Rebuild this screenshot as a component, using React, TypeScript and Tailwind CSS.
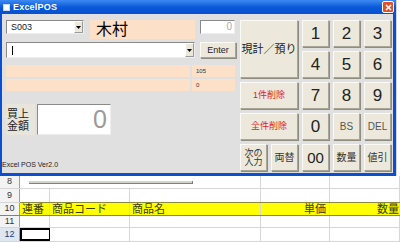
import React from "react";

const jp = { fontFamily: '"Liberation Sans", "Noto Sans CJK JP", sans-serif' };

function Btn({ children, className = "" }: { children: React.ReactNode; className?: string }) {
  return (
    <div
      className={
        "flex items-center justify-center bg-[#ece9dc] border border-t-[#fbfaf5] border-l-[#fbfaf5] border-b-[#a9a698] border-r-[#a9a698] shadow-[1px_1px_0_#8f8c80] leading-none " +
        className
      }
    >
      {children}
    </div>
  );
}

function Arrow() {
  return (
    <div className="w-[9px] h-full flex items-center justify-center bg-[#ece9dc] border border-t-white border-l-white border-b-[#9a9a9a] border-r-[#9a9a9a]">
      <svg width="5" height="3" viewBox="0 0 5 3">
        <path d="M0 0H5L2.5 3Z" fill="#000" />
      </svg>
    </div>
  );
}

function Sunken({ className = "", children }: { className?: string; children?: React.ReactNode }) {
  return (
    <div
      className={
        "bg-white border border-t-[#8a8a8a] border-l-[#8a8a8a] border-b-[#eeeeee] border-r-[#eeeeee] " +
        className
      }
    >
      {children}
    </div>
  );
}

function Cell({ w, children, className = "" }: { w: string; children?: React.ReactNode; className?: string }) {
  return (
    <div className={"h-full border-r border-[#d6d6d6] flex items-center shrink-0 " + w + " " + className}>{children}</div>
  );
}

function Row({ n, h, children, sel = false, className = "" }: { n: string; h: string; children?: React.ReactNode; sel?: boolean; className?: string }) {
  return (
    <div className={"flex border-b border-[#d6d6d6] " + h + " " + className}>
      <div
        className={
          "w-[20px] shrink-0 h-full flex items-center justify-center text-[9px] border-r border-[#9e9e9e] " +
          (sel ? "bg-[#dfe6f2] text-[#1d3f7a]" : "bg-[#f3f3f3] text-[#333]")
        }
      >
        {n}
      </div>
      {children}
    </div>
  );
}

export default function App() {
  return (
    <div className="w-[400px] h-[242px] overflow-hidden bg-white flex flex-col" style={jp}>
      <div className="flex h-[176px] shrink-0">
        <div className="w-[396px] h-full flex flex-col">
          {/* title bar */}
          <div className="h-[14px] shrink-0 bg-gradient-to-b from-[#3d8af2] via-[#0a5ad9] to-[#0850cf] flex items-center pl-[3px] pr-[2px]">
            <div className="w-[7px] h-[7px] bg-white border border-[#c8d8f0]" />
            <span className="ml-[3px] text-[9px] font-bold text-white leading-none tracking-[0.2px]">ExcelPOS</span>
            <div className="ml-auto w-[12px] h-[12px] rounded-[2px] bg-[#e0502a] border border-white flex items-center justify-center">
              <svg width="7" height="7" viewBox="0 0 7 7">
                <path d="M1 1L6 6M6 1L1 6" stroke="#fff" strokeWidth="1.6" />
              </svg>
            </div>
          </div>
          {/* body */}
          <div className="flex-1 bg-[#e0e0e0] border-l-2 border-r-[3px] border-b-[3px] border-[#0b4fd0] flex pl-[4px] pt-[6px]">
            {/* left column */}
            <div className="w-[230px] flex flex-col">
              <div className="flex items-start h-[19px]">
                <Sunken className="w-[78px] h-[14px] flex items-center">
                  <span className="flex-1 pl-[4px] text-[9px] leading-none text-[#222]">S003</span>
                  <Arrow />
                </Sunken>
                <div className="ml-[6px] w-[105px] h-[19px] bg-[#fde0c8] flex items-center pl-[6px] text-[16px] leading-none text-black">
                  木村
                </div>
                <Sunken className="ml-[5px] w-[35px] h-[14px] flex items-center justify-end pr-[2px] text-[10px] text-[#aaa] leading-none">
                  0
                </Sunken>
              </div>
              <div className="flex mt-[3px] h-[16px]">
                <Sunken className="w-[189px] h-[16px] flex items-center">
                  <div className="flex-1 pl-[5px]">
                    <div className="w-px h-[9px] bg-black" />
                  </div>
                  <Arrow />
                </Sunken>
                <Btn className="ml-[5px] w-[36px] h-[16px] text-[9px] text-[#222]">Enter</Btn>
              </div>
              <div className="flex mt-[7px] h-[12px]">
                <div className="w-[184px] bg-[#fde0c8]" />
                <div className="ml-[2px] w-[43px] bg-[#fde0c8] flex items-center pl-[4px] text-[6px] leading-none text-[#333]">105</div>
              </div>
              <div className="flex mt-[2px] h-[12px]">
                <div className="w-[184px] bg-[#fde0c8]" />
                <div className="ml-[2px] w-[43px] bg-[#fde0c8] flex items-center pl-[4px] text-[6px] leading-none text-[#333]">0</div>
              </div>
              <div className="flex mt-[13px] h-[31px]">
                <div className="w-[29px] bg-[#e8e6dc] flex flex-col justify-center pl-[1px] text-[11px] leading-[12px] text-[#222]">
                  <span>買上</span>
                  <span>金額</span>
                </div>
                <Sunken className="ml-[2px] w-[74px] h-[31px] flex items-center justify-end pr-[3px] text-[25px] leading-none text-[#9a9a9a]">
                  0
                </Sunken>
              </div>
              <div className="mt-[26px] -ml-[4px] text-[7px] leading-[8px] text-[#222]">Excel POS Ver2.0</div>
            </div>
            {/* right keypad */}
            <div className="ml-[4px] grid grid-cols-[repeat(5,27px)] grid-rows-[repeat(5,27px)] gap-[4px]">
              <Btn className="col-span-2 row-span-2 text-[11px] text-[#222]">現計／預り</Btn>
              <Btn className="text-[17px] text-[#222]">1</Btn>
              <Btn className="text-[17px] text-[#222]">2</Btn>
              <Btn className="text-[17px] text-[#222]">3</Btn>
              <Btn className="text-[17px] text-[#222]">4</Btn>
              <Btn className="text-[17px] text-[#222]">5</Btn>
              <Btn className="text-[17px] text-[#222]">6</Btn>
              <Btn className="col-span-2 text-[9px] text-[#e02020]">1件削除</Btn>
              <Btn className="text-[17px] text-[#222]">7</Btn>
              <Btn className="text-[17px] text-[#222]">8</Btn>
              <Btn className="text-[17px] text-[#222]">9</Btn>
              <Btn className="col-span-2 text-[9px] text-[#e02020]">全件削除</Btn>
              <Btn className="text-[17px] text-[#222]">0</Btn>
              <Btn className="text-[10px] text-[#555]">BS</Btn>
              <Btn className="text-[10px] text-[#555]">DEL</Btn>
              <Btn className="flex-col text-[9px] leading-[10px] text-[#333]">
                <span>次の</span>
                <span>入力</span>
              </Btn>
              <Btn className="text-[10px] text-[#333]">両替</Btn>
              <Btn className="text-[15px] text-[#222]">00</Btn>
              <Btn className="text-[10px] text-[#333]">数量</Btn>
              <Btn className="text-[10px] text-[#333]">値引</Btn>
            </div>
          </div>
        </div>
        <div className="flex-1 bg-white border-l border-[#d6d6d6]" />
      </div>
      {/* spreadsheet */}
      <div className="flex flex-col text-[#333]">
        <Row n="8" h="h-[13px]">
          <Cell w="w-[30px]" className="border-r-0">
            <div className="ml-[9px] w-[21px] h-[3px] bg-[#d4d4cc] border-b border-[#808080] mt-[1px]" />
          </Cell>
          <Cell w="w-[80px]" className="border-r-0">
            <div className="w-[80px] h-[3px] bg-[#d4d4cc] border-b border-[#808080] mt-[1px]" />
          </Cell>
          <Cell w="w-[131px]">
            <div className="w-[63px] h-[3px] bg-[#d4d4cc] border-b border-r border-[#808080] mt-[1px]" />
          </Cell>
          <Cell w="w-[69px]" />
          <Cell w="w-[70px]" />
        </Row>
        <Row n="9" h="h-[14px]">
          <Cell w="w-[30px]" />
          <Cell w="w-[80px]" />
          <Cell w="w-[131px]" />
          <Cell w="w-[69px]" />
          <Cell w="w-[70px]" />
        </Row>
        <Row n="10" h="h-[13px]" className="border-b-[#8a8a3a]">
          <div className="flex flex-1 bg-[#ffff00] border-t border-[#8a8a3a] -mt-px text-[11px] leading-none text-[#3a3a1a]">
            <Cell w="w-[30px]" className="pl-[2px] border-[#c8c800]">連番</Cell>
            <Cell w="w-[80px]" className="pl-[2px] border-[#c8c800]">商品コード</Cell>
            <Cell w="w-[131px]" className="pl-[2px] border-[#6a6a2a]">商品名</Cell>
            <Cell w="w-[69px]" className="justify-end pr-[3px] border-[#c8c800]">単価</Cell>
            <Cell w="w-[70px]" className="justify-end -mr-[2px]">数量</Cell>
          </div>
        </Row>
        <Row n="11" h="h-[12px]">
          <Cell w="w-[30px]" />
          <Cell w="w-[80px]" />
          <Cell w="w-[131px]" />
          <Cell w="w-[69px]" />
          <Cell w="w-[70px]" />
        </Row>
        <Row n="12" h="h-[14px]" sel>
          <Cell w="w-[30px]" className="border-2 border-black" />
          <Cell w="w-[80px]" />
          <Cell w="w-[131px]" />
          <Cell w="w-[69px]" />
          <Cell w="w-[70px]" />
        </Row>
      </div>
    </div>
  );
}
